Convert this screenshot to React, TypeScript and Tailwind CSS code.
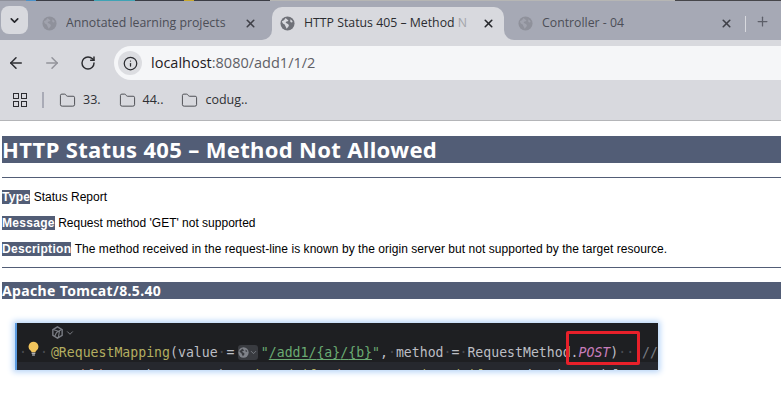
import { ArrowLeft, ArrowRight, ChevronDown, Folder, Info, Plus, RotateCw, X } from 'lucide-react'

function FilledGlobe({ className, cut }: { className: string; cut: string }) {
  return (
    <svg viewBox="0 0 16 16" width={15} height={15} className={`shrink-0 ${className}`}>
      <circle cx="8" cy="8" r="7.5" fill="currentColor" />
      <path d="M2 5.5c2-.5 3-2 4-3.5 1 1.500 2.500 1.500 3 3-1 1-2.500.5-3 2 1 1.500 3 1 3.500 3-.5 1.500-1.500 2.500-2.500 3.500-.5-2-1.500-3-2-4.500C3.500 8.500 2.500 7.500 2 5.500z" fill={cut} />
      <path d="M11 3.500c1 .5 2 1.500 2.500 3-1 .5-2 .5-2.500-.5z" fill={cut} />
    </svg>
  )
}

function Tab({ title, fade, active, className }: { title: string; fade?: string; active?: boolean; className: string }) {
  return (
    <div className={`relative flex h-[33px] shrink-0 items-center ${className}`}>
      {active && (
        <>
          <span className="absolute bottom-0 -left-[10px] h-[10px] w-[10px] bg-[#d8d9de]">
            <span className="block h-full w-full rounded-br-[10px] bg-[#a6a9b5]" />
          </span>
          <span className="absolute -right-[10px] bottom-0 h-[10px] w-[10px] bg-[#d8d9de]">
            <span className="block h-full w-full rounded-bl-[10px] bg-[#a6a9b5]" />
          </span>
        </>
      )}
      <FilledGlobe
        className={active ? 'text-[#6f7178]' : 'text-[#8f919b]'}
        cut={active ? '#d8d9de' : '#a0a2ad'}
      />
      <span className="ml-[9px] min-w-0 flex-1 overflow-hidden text-[12.3px] whitespace-nowrap">
        {title}
        {fade && <span className="text-[#a4a5ab]">{fade}</span>}
      </span>
      <X size={13} strokeWidth={3} className={active ? 'ml-[2px] text-[#26272b]' : 'text-[#3f4047]'} />
    </div>
  )
}

function Bookmark({ label }: { label: string }) {
  return (
    <div className="flex items-center gap-[7px] text-[12.5px] text-[#2f3034]">
      <Folder size={17} strokeWidth={1.3} className="text-[#45464b]" />
      <span>{label}</span>
    </div>
  )
}

function BrowserChrome() {
  return (
    <div className="bg-[#d8d9de]">
      <div className="flex h-[1px]">
        <div className="w-[26px] bg-[#8e909a]" />
        <div className="w-[10px] bg-[#4b92c9]" />
        <div className="w-[58px] bg-[#3b3d45]" />
        <div className="w-[41px] bg-[#3fa3b5]" />
        <div className="w-[49px] bg-[#3b3d45]" />
        <div className="w-[10px] bg-[#c9a92e]" />
        <div className="w-[76px] bg-[#3b3d45]" />
        <div className="w-[405px] bg-[#b6b6b4]" />
        <div className="flex-1 bg-[#46464a]" />
      </div>
      <div className="flex h-[39px] items-end bg-[#a6a9b5] text-[#4c4e57]">
        <div className="mb-[6px] ml-[1px] flex h-[28px] w-[27px] items-center justify-center rounded-[8px] bg-[#d8d9de]">
          <ChevronDown size={13} strokeWidth={3} className="text-[#26272b]" />
        </div>
        <Tab title="Annotated learning projects" className="ml-[1px] w-[243px] pr-[15px] pl-[13px]" />
        <Tab
          title="HTTP Status 405 – Method "
          fade="N"
          active
          className="w-[232px] rounded-t-[10px] bg-[#d8d9de] pr-[9px] pl-[8px] text-[#2b2c30]"
        />
        <Tab title="Controller - 04" className="w-[241px] pr-[12px] pl-[14px]" />
        <div className="mb-[8px] h-[16px] w-px bg-[#d8d9de]" />
        <Plus size={15} strokeWidth={2} className="mb-[11px] ml-[9px] text-[#5d5f69]" />
      </div>
      <div className="flex h-[40px] items-center pt-[6px] pl-[7px]">
        <ArrowLeft size={18} strokeWidth={2} className="text-[#2b2c30]" />
        <ArrowRight size={18} strokeWidth={2} className="ml-[18px] text-[#93949b]" />
        <RotateCw size={16} strokeWidth={2.2} className="ml-[19px] text-[#2b2c30]" />
        <div className="ml-[18px] flex h-[34px] flex-1 items-center rounded-l-full bg-[#f5f6f8] pl-[4px]">
          <div className="flex h-[24px] w-[24px] items-center justify-center rounded-full bg-[#dcdde1]">
            <Info size={15} strokeWidth={2} className="text-[#2b2c30]" />
          </div>
          <span className="ml-[9px] text-[14.5px] text-[#5f6066]">
            <span className="text-[#1f2023]">localhost</span>:8080/add1/1/2
          </span>
        </div>
      </div>
      <div className="flex h-[41px] items-center border-b border-[#b4b5b8] pl-[13px]">
        <div className="grid grid-cols-2 gap-[2px]">
          <div className="h-[6px] w-[6px] border-[1.5px] border-[#2b2c30]" />
          <div className="h-[6px] w-[6px] border-[1.5px] border-[#2b2c30]" />
          <div className="h-[6px] w-[6px] border-[1.5px] border-[#2b2c30]" />
          <div className="h-[6px] w-[6px] border-[1.5px] border-[#2b2c30]" />
        </div>
        <div className="mr-[15px] ml-[15px] h-[16px] w-[2px] bg-[#a9abb6]" />
        <div className="flex items-center gap-[18px]">
          <Bookmark label="33." />
          <Bookmark label="44.." />
          <Bookmark label="codug.." />
        </div>
      </div>
    </div>
  )
}

function Label({ children }: { children: string }) {
  return <b className="bg-[#525d76] tracking-[0.3px] text-white">{children}</b>
}

function TomcatPage() {
  return (
    <div className="pt-[15px] pl-[2px] font-['Liberation_Sans',sans-serif] text-[12px] text-black">
      <h1 className="h-[27px] bg-[#525d76] font-['Noto_Sans',sans-serif] text-[22px] leading-[27px] font-bold tracking-[0.33px] text-white">
        HTTP Status 405 – Method Not Allowed
      </h1>
      <div className="mt-[14px] h-px bg-[#525d76]" />
      <p className="mt-[12px] h-[14px] leading-[14px]">
        <Label>Type</Label> Status Report
      </p>
      <p className="mt-[12px] h-[14px] leading-[14px]">
        <Label>Message</Label> Request method 'GET' not supported
      </p>
      <p className="mt-[12px] h-[14px] leading-[14px]">
        <Label>Description</Label>{' '}
        <span className="tracking-[0.05px]">
          The method received in the request-line is known by the origin server but not supported by the target
          resource.
        </span>
      </p>
      <div className="mt-[11px] h-px bg-[#525d76]" />
      <h3 className="mt-[14px] h-[17px] bg-[#525d76] font-['Noto_Sans',sans-serif] text-[14px] leading-[17px] font-bold tracking-[0.35px] text-white">
        Apache Tomcat/8.5.40
      </h3>
    </div>
  )
}

function Dot() {
  return <span className="text-[#4a4c52]">·</span>
}

function CodeShot() {
  return (
    <div className="relative mt-[24px] ml-[15px] h-[47px] w-[643px] overflow-hidden border-l-2 border-[#5b9be0] bg-[#1e1f22] font-['DejaVu_Sans_Mono',monospace] text-[13.2px] leading-[19px] whitespace-pre text-[#bcbec4] shadow-[0_0_6px_2px_#b5d3f7]">
      <div className="flex h-[19px] items-center pl-[34px]">
        <svg viewBox="0 0 14 14" width={13} height={13} className="text-[#7b7e85]">
          <path d="M7 1l5 3v6l-5 3-5-3V4z" fill="none" stroke="currentColor" strokeWidth="1.5" />
          <path d="M3 4l6 2-1 6M11 4L6 7 4 11" fill="none" stroke="currentColor" strokeWidth="1.2" />
        </svg>
        <ChevronDown size={10} className="ml-[1px] text-[#8a8d94]" />
      </div>
      <div className="flex h-[20px] pt-[1px]">
        <span className="ml-[2px] text-[#4a4c52]">·</span>
        <svg viewBox="0 0 12 16" width={11} height={15} className="mt-[-2px] ml-[1px] shrink-0">
          <path d="M6 .5a5.500 5.500 0 0 0-3 10c.6.5.8 1 .9 1.500h4.200c.1-.5.3-1 .9-1.500a5.500 5.500 0 0 0-3-10z" fill="#f2c55c" />
          <path d="M4 13.200h4M4.500 15h3" stroke="#dfe1e5" strokeWidth="1.100" />
        </svg>
        <span className="ml-[1px] text-[#4a4c52]">·</span>
        <span className="ml-[3px] text-[#b3ae60]">@RequestMapping</span>
        <span>
          (value
          <Dot />
          <span className="ml-[1px]">=</span>
        </span>
        <span className="mx-[3px] flex h-[15px] w-[21px] items-center justify-center self-center rounded-[3px] bg-[#393b40]">
          <FilledGlobe className="h-[11px] w-[11px] text-[#7f8289]" cut="#393b40" />
          <ChevronDown size={9} className="text-[#8a8d94]" />
        </span>
        <span className="text-[#6aab73]">
          "<span className="underline underline-offset-2">/add1/{'{a}'}/{'{b}'}</span>"
        </span>
        <span>
          ,<Dot />
          method
          <Dot />=<Dot />
          RequestMethod.
        </span>
        <span className="text-[#c77dbb] italic">POST</span>
        <span>)</span>
        <Dot />
        <Dot />
        <Dot />
        <span className="text-[#7a7e85]">//</span>
      </div>
      <div className="h-[8px] bg-[#26282e] pt-[4px] pl-[48px]">
        <span className="text-[#cf8e6d]">public</span>
        <Dot />
        <span>String</span>
        <Dot />
        <span className="text-[#56a8f5]">Test1</span>
        <span>(</span>
        <span className="text-[#b3ae60]">@PathVariable</span>
        <Dot />
        <span className="text-[#cf8e6d]">int</span>
        <Dot />
        <span>a,</span>
        <Dot />
        <span className="text-[#b3ae60]">@PathVariable</span>
        <Dot />
        <span>String</span>
        <Dot />
        <span>b,</span>
        <Dot />
        <span>Model</span>
        <Dot />
        <span>m</span>
      </div>
      <div className="absolute top-[8px] left-[549px] h-[34px] w-[74px] rounded-[2px] border-[3px] border-[#e8202a]" />
    </div>
  )
}

export default function App() {
  return (
    <div className="h-[409px] w-[781px] overflow-hidden bg-white font-['Open_Sans',sans-serif]">
      <BrowserChrome />
      <TomcatPage />
      <CodeShot />
    </div>
  )
}
